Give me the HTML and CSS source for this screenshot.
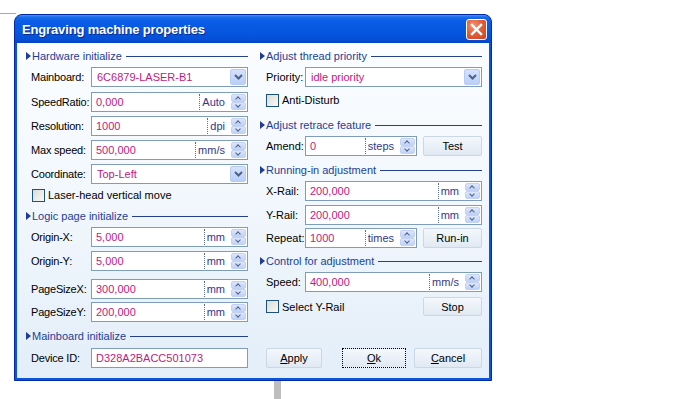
FILE: index.html
```html
<!DOCTYPE html>
<html lang="en">
<head>
	<meta charset="utf-8" />
	<title>Engraving machine properties</title>
	<link rel="stylesheet" href="styles.css">
</head>
<body>
	<div class="desk-line"></div>
	<div class="desk-bar"></div>

	<div class="window">
		<div class="titlebar">
			<span class="title">Engraving machine properties</span>
			<span class="close">
				<svg width="19" height="19" viewBox="0 0 19 19"><path d="M5 5 L14 14 M14 5 L5 14" stroke="#FFFFFF" stroke-width="2.4" stroke-linecap="square" fill="none"/></svg>
			</span>
		</div>

		<div class="client">
			<!-- left column -->
			<div class="col col-left">
				<div class="group"><span class="arrow"></span><span class="gtext">Hardware initialize</span><span class="gline"></span></div>

				<div class="row mt4">
					<label>Mainboard:</label>
					<div class="box combo"><span class="val">6C6879-LASER-B1</span><span class="drop"><svg width="9" height="6" viewBox="0 0 9 6"><path d="M1 1 L4.5 4.5 L8 1" stroke="#4D6185" stroke-width="2" fill="none"/></svg></span></div>
				</div>
				<div class="row mt5">
					<label>SpeedRatio:</label>
					<div class="box"><span class="val">0,000</span><span class="unit">Auto</span><span class="spin"><span class="up"></span><span class="dn"></span></span></div>
				</div>
				<div class="row mt4">
					<label>Resolution:</label>
					<div class="box"><span class="val">1000</span><span class="unit">dpi</span><span class="spin"><span class="up"></span><span class="dn"></span></span></div>
				</div>
				<div class="row mt4">
					<label>Max speed:</label>
					<div class="box"><span class="val">500,000</span><span class="unit">mm/s</span><span class="spin"><span class="up"></span><span class="dn"></span></span></div>
				</div>
				<div class="row mt4">
					<label>Coordinate:</label>
					<div class="box combo"><span class="val">Top-Left</span><span class="drop"><svg width="9" height="6" viewBox="0 0 9 6"><path d="M1 1 L4.5 4.5 L8 1" stroke="#4D6185" stroke-width="2" fill="none"/></svg></span></div>
				</div>
				<div class="check-row mt2 indent6">
					<span class="check"></span><span>Laser-head vertical move</span>
				</div>

				<div class="group mt5"><span class="arrow"></span><span class="gtext">Logic page initialize</span><span class="gline"></span></div>

				<div class="row mt4">
					<label>Origin-X:</label>
					<div class="box"><span class="val">5,000</span><span class="unit">mm</span><span class="spin"><span class="up"></span><span class="dn"></span></span></div>
				</div>
				<div class="row mt4">
					<label>Origin-Y:</label>
					<div class="box"><span class="val">5,000</span><span class="unit">mm</span><span class="spin"><span class="up"></span><span class="dn"></span></span></div>
				</div>
				<div class="row mt8">
					<label>PageSizeX:</label>
					<div class="box"><span class="val">300,000</span><span class="unit">mm</span><span class="spin"><span class="up"></span><span class="dn"></span></span></div>
				</div>
				<div class="row mt3">
					<label>PageSizeY:</label>
					<div class="box"><span class="val">200,000</span><span class="unit">mm</span><span class="spin"><span class="up"></span><span class="dn"></span></span></div>
				</div>

				<div class="group mt7"><span class="arrow"></span><span class="gtext">Mainboard initialize</span><span class="gline"></span></div>

				<div class="row mt5">
					<label>Device ID:</label>
					<div class="box"><span class="val">D328A2BACC501073</span></div>
				</div>
			</div>

			<!-- right column -->
			<div class="col col-right">
				<div class="group"><span class="arrow"></span><span class="gtext">Adjust thread priority</span><span class="gline"></span></div>

				<div class="row mt4">
					<label>Priority:</label>
					<div class="box combo"><span class="val">idle priority</span><span class="drop"><svg width="9" height="6" viewBox="0 0 9 6"><path d="M1 1 L4.5 4.5 L8 1" stroke="#4D6185" stroke-width="2" fill="none"/></svg></span></div>
				</div>
				<div class="check-row mt4 indent6">
					<span class="check"></span><span>Anti-Disturb</span>
				</div>

				<div class="group mt9"><span class="arrow"></span><span class="gtext">Adjust retrace feature</span><span class="gline"></span></div>

				<div class="row mt4">
					<label>Amend:</label>
					<div class="box short"><span class="val">0</span><span class="unit">steps</span><span class="spin"><span class="up"></span><span class="dn"></span></span></div>
					<button class="btn side">Test</button>
				</div>

				<div class="group mt7"><span class="arrow"></span><span class="gtext">Running-in adjustment</span><span class="gline"></span></div>

				<div class="row mt4">
					<label>X-Rail:</label>
					<div class="box"><span class="val">200,000</span><span class="unit">mm</span><span class="spin"><span class="up"></span><span class="dn"></span></span></div>
				</div>
				<div class="row mt4">
					<label>Y-Rail:</label>
					<div class="box"><span class="val">200,000</span><span class="unit">mm</span><span class="spin"><span class="up"></span><span class="dn"></span></span></div>
				</div>
				<div class="row mt3">
					<label>Repeat:</label>
					<div class="box short"><span class="val">1000</span><span class="unit">times</span><span class="spin"><span class="up"></span><span class="dn"></span></span></div>
					<button class="btn side">Run-in</button>
				</div>

				<div class="group mt6"><span class="arrow"></span><span class="gtext">Control for adjustment</span><span class="gline"></span></div>

				<div class="row mt4">
					<label>Speed:</label>
					<div class="box"><span class="val">400,000</span><span class="unit">mm/s</span><span class="spin"><span class="up"></span><span class="dn"></span></span></div>
				</div>
				<div class="check-row stop-row mt5 indent6">
					<span class="check"></span><span class="grow">Select Y-Rail</span>
					<button class="btn side">Stop</button>
				</div>

				<div class="actions">
					<button class="btn apply"><u>A</u>pply</button>
					<button class="btn ok"><u>O</u>k</button>
					<button class="btn cancel"><u>C</u>ancel</button>
				</div>
			</div>
		</div>
	</div>
</body>
</html>
```

FILE: styles.css
```css
body
{
	margin: 0;
	background-color: #FFFFFF;
	font-family: "Liberation Sans", Arial, sans-serif;
	font-size: 11px;
	color: #000000;
}

/* bits of the desktop behind the dialog */
.desk-line
{
	position: absolute;
	left: 0;
	top: 13px;
	width: 16px;
	height: 1px;
	background-color: #A9A9A9;
}

.desk-bar
{
	position: absolute;
	left: 274px;
	top: 370px;
	width: 7px;
	height: 29px;
	background-color: #BEBEBE;
}

.window
{
	position: relative;
	margin: 14px 0 0 14px;
	width: 478px;
	height: 367px;
	box-sizing: border-box;
	display: flex;
	flex-direction: column;
	border: 1px solid #0029A3;
	border-radius: 8px 8px 0 0;
	background-color: #0B55DC;
	overflow: hidden;
}

	.window .titlebar
	{
		height: 28px;
		flex: none;
		display: flex;
		align-items: center;
		padding: 0 4px 0 7px;
		background: linear-gradient(to bottom, #4C96F7 0px, #1A6CEC 2px, #0B5CE6 6px, #0757E0 16px, #0550D8 24px, #0344C4 28px);
	}

	.window .title
	{
		flex: 1;
		color: #FFFFFF;
		font-size: 13px;
		font-weight: bold;
		letter-spacing: -0.15px;
		text-shadow: 1px 1px 0 #0A2A8C;
		margin-top: 1px;
	}

	.window .close
	{
		width: 19px;
		height: 19px;
		margin-top: 1px;
		border: 1px solid #FFFFFF;
		border-radius: 3px;
		background: radial-gradient(circle at 35% 30%, #F49677 0%, #E2603A 45%, #C8431F 100%);
		display: flex;
	}

.client
{
	flex: 1;
	display: flex;
	gap: 12px;
	margin: 0 2px 2px 2px;
	padding: 6px 7px 0 9px;
	background: linear-gradient(to bottom, #FBFDFF 0%, #F1F7FC 50%, #E3EEF9 100%);
}

	.client .col
	{
		width: 222px;
		display: flex;
		flex-direction: column;
	}

/* group header with arrow and line */
.group
{
	height: 14px;
	display: flex;
	align-items: center;
	color: #1E3E96;
}

	.group .arrow
	{
		width: 0;
		height: 0;
		border-left: 5px solid #1E3E96;
		border-top: 4px solid transparent;
		border-bottom: 4px solid transparent;
	}

	.group .gtext
	{
		padding-left: 1px;
	}

	.group .gline
	{
		flex: 1;
		height: 1px;
		margin-left: 4px;
		background-color: #23418F;
	}

.row
{
	height: 20px;
	display: flex;
	align-items: center;
}

	.col-left .row
	{
		padding-left: 5px;
	}

	.col-left .row label
	{
		width: 60px;
		flex: none;
		letter-spacing: -0.2px;
	}

	.col-right .row
	{
		padding-left: 6px;
	}

	.col-right .row label
	{
		width: 39px;
		flex: none;
	}

.box
{
	flex: 1;
	height: 20px;
	box-sizing: border-box;
	display: flex;
	align-items: center;
	border: 1px solid #7F9DB9;
	background-color: #FFFFFF;
}

	.box.short
	{
		flex: none;
		width: 112px;
	}

	.box .val
	{
		flex: 1;
		padding-left: 4px;
		color: #C2197E;
		white-space: nowrap;
	}

	.box.combo .val
	{
		padding-left: 5px;
	}

	.box .unit
	{
		height: 16px;
		line-height: 16px;
		padding: 0 6px 0 2px;
		border-left: 1px dotted #5B6B9C;
		color: #34378A;
	}

	.box .drop
	{
		width: 16px;
		height: 16px;
		margin-right: 1px;
		box-sizing: border-box;
		border: 1px solid #B8CBF3;
		border-radius: 2px;
		background: linear-gradient(to bottom, #D6E2FD, #B9CEF9);
		display: flex;
		align-items: center;
		justify-content: center;
	}

	.box .spin
	{
		width: 15px;
		height: 16px;
		margin-right: 1px;
		display: flex;
		flex-direction: column;
		gap: 0;
	}

	.box .spin span
	{
		flex: 1;
		position: relative;
		border: 1px solid #C3D2F3;
		border-radius: 2px;
		background: linear-gradient(to bottom, #DDE7FD, #C0D2F8);
	}

	.box .spin .up::after, .box .spin .dn::after
	{
		content: "";
		position: absolute;
		left: 4px;
		width: 3px;
		height: 3px;
		border-left: 1.5px solid #4D6185;
		border-top: 1.5px solid #4D6185;
	}

	.box .spin .up::after
	{
		top: 2px;
		transform: rotate(45deg);
	}

	.box .spin .dn::after
	{
		top: 0;
		transform: rotate(225deg);
	}

.check-row
{
	height: 18px;
	display: flex;
	align-items: center;
	gap: 3px;
}

	.check-row.indent6
	{
		padding-left: 6px;
	}

	.check-row.stop-row
	{
		height: 19px;
	}

	.check-row .grow
	{
		flex: 1;
	}

.check
{
	width: 13px;
	height: 13px;
	box-sizing: border-box;
	border: 1px solid #1C5180;
	background: linear-gradient(135deg, #DCDCD6, #F8F8F6);
}

.btn
{
	height: 20px;
	box-sizing: border-box;
	padding: 0;
	border: 1px solid #CAD7E6;
	border-radius: 2px;
	background: linear-gradient(to bottom, #F4F8FC, #E0E9F3);
	font-family: "Liberation Sans", Arial, sans-serif;
	font-size: 11px;
	color: #000000;
}

	.btn.side
	{
		width: 59px;
		margin-left: 6px;
		flex: none;
	}

	.check-row .btn.side
	{
		height: 19px;
	}

.actions
{
	margin-top: 32px;
	padding-left: 6px;
	display: flex;
}

	.actions .apply
	{
		width: 56px;
	}

	.actions .ok
	{
		width: 64px;
		margin-left: 20px;
		border: 1px dotted #000000;
		border-radius: 0;
	}

	.actions .cancel
	{
		width: 68px;
		margin-left: 8px;
	}

.mt2 { margin-top: 2px; }
.mt3 { margin-top: 3px; }
.mt4 { margin-top: 4px; }
.mt5 { margin-top: 5px; }
.mt6 { margin-top: 6px; }
.mt7 { margin-top: 7px; }
.mt8 { margin-top: 8px; }
.mt9 { margin-top: 9px; }
```
